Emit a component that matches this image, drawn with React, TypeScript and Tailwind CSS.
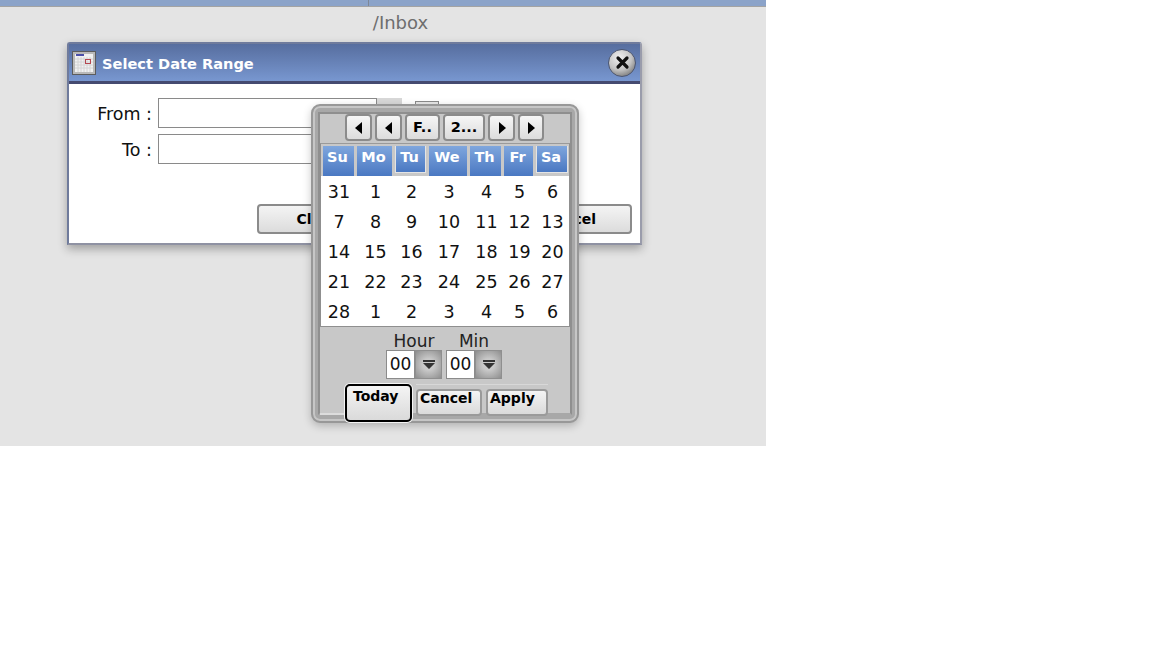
const font = { fontFamily: '"DejaVu Sans", sans-serif' };

const headers = [
    { label: "Su", selected: false },
    { label: "Mo", selected: false },
    { label: "Tu", selected: true },
    { label: "We", selected: false },
    { label: "Th", selected: false },
    { label: "Fr", selected: false },
    { label: "Sa", selected: true },
];

const days = [
    31, 1, 2, 3, 4, 5, 6,
    7, 8, 9, 10, 11, 12, 13,
    14, 15, 16, 17, 18, 19, 20,
    21, 22, 23, 24, 25, 26, 27,
    28, 1, 2, 3, 4, 5, 6,
];

function CalendarIcon() {
    return (
        <svg width="24" height="24" viewBox="0 0 24 24">
            <rect x="0.5" y="0.5" width="23" height="23" fill="#b9b9b9" stroke="#5c5c5c" />
            <rect x="3" y="3" width="18" height="18" fill="#f1f1f1" />
            <rect x="4" y="3" width="8" height="2" fill="#4a4fa8" />
            <path d="M3 8h18M3 11h18M3 14h18M3 17h18M6 6v15M9 6v15M12 6v15M15 6v15M18 6v15" stroke="#d4d4d4" strokeWidth="1" />
            <rect x="13.5" y="8.5" width="5" height="4" fill="none" stroke="#b5474f" />
        </svg>
    );
}

function CloseButton() {
    return (
        <div className="ml-auto mr-[4px] flex size-[28px] items-center justify-center rounded-full border border-[#4c5670] bg-[radial-gradient(circle_at_40%_30%,#f0f0f0_0%,#c4c4c4_50%,#555555_100%)]">
            <svg width="15" height="15" viewBox="0 0 15 15">
                <path d="M3 3l9 9M12 3l-9 9" stroke="#111" strokeWidth="3.2" strokeLinecap="round" />
            </svg>
        </div>
    );
}

function NavButton({ width, children }: { width: string; children: React.ReactNode }) {
    return (
        <div className={`${width} flex h-[27px] items-center justify-center rounded-[4px] border-2 border-[#8b8b8b] bg-gradient-to-b from-[#f6f6f6] to-[#dcdcdc] text-[14.5px] font-bold text-black`}>
            {children}
        </div>
    );
}

function Tri({ dir }: { dir: "left" | "right" }) {
    return (
        <svg width="8" height="12" viewBox="0 0 8 12">
            <path d={dir === "left" ? "M7 0v12L0 6z" : "M1 0v12l7-6z"} fill="#000" />
        </svg>
    );
}

function TimeField() {
    return (
        <div className="flex h-[29px] w-[56px]">
            <div className="flex w-[29px] items-center justify-center border border-[#8b8b8b] bg-white text-[17px] text-[#111]">00</div>
            <div className="flex w-[27px] items-center justify-center border border-[#8f8f8f] bg-[radial-gradient(circle,#c9c9c9_30%,#8e8e8e_100%)]">
                <svg width="12" height="9" viewBox="0 0 12 9">
                    <path d="M0 0h12v2H0zM0 3h12L6 9z" fill="#333" />
                </svg>
            </div>
        </div>
    );
}

function SmallButton({ width, label }: { width: string; label: string }) {
    return (
        <div className={`${width} h-[27px] rounded-[4px] border-2 border-[#9a9a9a] bg-gradient-to-b from-[#f4f4f4] to-[#dadada] pl-[2px] text-[14px] leading-[14px] font-bold text-black`}>
            {label}
        </div>
    );
}

function Calendar() {
    return (
        <div className="absolute left-[311px] top-[104px] z-10 h-[319px] w-[268px] rounded-[9px] border-2 border-[#989898] bg-[#a8a8a8] px-[5px] py-[6px] shadow-[0_3px_8px_rgba(0,0,0,0.22),inset_0_0_0_2px_#c6c6c6]">
            <div className="relative h-full border-2 border-[#8f8f8f] border-b-[#a8a8a8] bg-[#c8c8c8]">
                <div className="flex gap-[3px] pl-[25px]">
                    <NavButton width="w-[27px]"><Tri dir="left" /></NavButton>
                    <NavButton width="w-[27px]"><Tri dir="left" /></NavButton>
                    <NavButton width="w-[35px]">F..</NavButton>
                    <NavButton width="w-[42px]">2...</NavButton>
                    <NavButton width="w-[27px]"><Tri dir="right" /></NavButton>
                    <NavButton width="w-[26px]"><Tri dir="right" /></NavButton>
                </div>

                <div className="mt-[2px] w-[250px] border border-[#8f8f8f] border-t-[#9a9a9a]">
                    <div className="grid h-[32px] grid-cols-[34px_38px_34px_41px_34px_32px_35px] bg-[#c8c8c8] pt-[2px]">
                        {headers.map((h) => (
                            <div
                                key={h.label}
                                className={`ml-[2px] mr-[1px] flex justify-center bg-gradient-to-b from-[#7fa6dd] to-[#4a78c2] pr-[2px] pt-[2px] text-[14.5px] leading-[18px] font-bold text-white ${h.selected ? "mb-[3px] border-x border-b border-[#e4e4e4]" : ""}`}
                            >
                                {h.label}
                            </div>
                        ))}
                    </div>
                    <div className="grid grid-cols-[35px_38px_34px_41px_34px_32px_34px] bg-white">
                        {days.map((d, i) => (
                            <div key={i} className="flex h-[30px] items-center justify-center pl-px pt-[2px] text-[17.5px] text-[#111]">
                                {d}
                            </div>
                        ))}
                    </div>
                </div>

                <div className="mt-[6px] flex gap-[4px] pl-[66px]">
                    <div className="flex w-[56px] flex-col items-center">
                        <div className="h-[17px] text-[17px] leading-[17px] text-[#222]">Hour</div>
                        <TimeField />
                    </div>
                    <div className="flex w-[56px] flex-col items-center">
                        <div className="h-[17px] text-[17px] leading-[17px] text-[#222]">Min</div>
                        <TimeField />
                    </div>
                </div>

                <div className="mt-[5px] flex h-[30px] items-start pl-[25px]">
                    <div className="relative z-10 h-[38px] w-[67px] rounded-[5px] border-2 border-black bg-gradient-to-b from-[#f4f4f4] to-[#dadada] pl-[6px] text-[14px] leading-[20px] font-bold text-black shadow-[0_0_0_1px_#f4f4f4]">
                        Today
                    </div>
                    <div className="ml-[4px] flex gap-[4px] border-t border-[#d8d8d8] pt-[4px]">
                        <SmallButton width="w-[66px]" label="Cancel" />
                        <SmallButton width="w-[62px]" label="Apply" />
                    </div>
                </div>
                <div className="absolute bottom-[-2px] left-0 h-[2px] w-[25px] bg-[#dcdcdc]" />
            </div>
        </div>
    );
}

export default function App() {
    return (
        <div className="min-h-[648px] w-[1152px] bg-white" style={font}>
            <div className="relative h-[446px] w-[766px] bg-[#e4e4e4]">
                <div className="flex h-[7px] border-b border-[#a3a3a3] bg-[#8ba3c9]">
                    <div className="h-full w-[369px] border-r border-[#7d8797]" />
                </div>
                <div className="flex h-[32px] justify-center pl-[35px] text-[18px] leading-[32px] text-[#6e6e6e]">/Inbox</div>

                {/* dialog window */}
                <div className="absolute left-[67px] top-[42px] h-[203px] w-[575px] rounded-t-[3px] border-2 border-[#6f7b9c] border-r-[#9a9cab] border-b-[#8f92a3] bg-white shadow-[0_4px_10px_rgba(0,0,0,0.3)]">
                    <div className="flex h-[40px] items-center border-b-[3px] border-[#454a70] bg-gradient-to-b from-[#576e9f] to-[#7897d0] pl-[3px]">
                        <CalendarIcon />
                        <span className="ml-[6px] pt-[3px] text-[14.6px] font-bold text-white">Select Date Range</span>
                        <CloseButton />
                    </div>
                    <div className="flex flex-col gap-[6px] pt-[14px] pl-[27px] text-[17.5px] text-[#111]">
                        <div className="flex items-center">
                            <span className="w-[56px] pt-[2px] text-right">From :</span>
                            <div className="ml-[6px] h-[30px] w-[219px] border border-[#8a8a8a] bg-white" />
                            <div className="h-[30px] w-[25px] bg-[#d8d8d8]" />
                            <div className="mt-[3px] ml-[13px] h-[24px] w-[24px] self-start border border-[#8a8a8a] bg-[#e8e8e8]" />
                        </div>
                        <div className="flex items-center">
                            <span className="w-[56px] pt-[2px] text-right">To :</span>
                            <div className="ml-[6px] h-[30px] w-[219px] border border-[#8a8a8a] bg-white" />
                        </div>
                    </div>
                    <div className="mt-[40px] flex justify-between pl-[188px] pr-[8px] text-[14px] font-bold text-black">
                        <div className="flex h-[30px] w-[132px] items-center justify-center rounded-[4px] border-2 border-[#8b8b8b] bg-gradient-to-b from-[#f4f4f4] to-[#dcdcdc] pr-[12px]">Clear</div>
                        <div className="flex h-[30px] w-[124px] items-center justify-center rounded-[4px] border-2 border-[#8b8b8b] bg-gradient-to-b from-[#f4f4f4] to-[#dcdcdc]">Cancel</div>
                    </div>
                </div>

                <Calendar />
            </div>
        </div>
    );
}
